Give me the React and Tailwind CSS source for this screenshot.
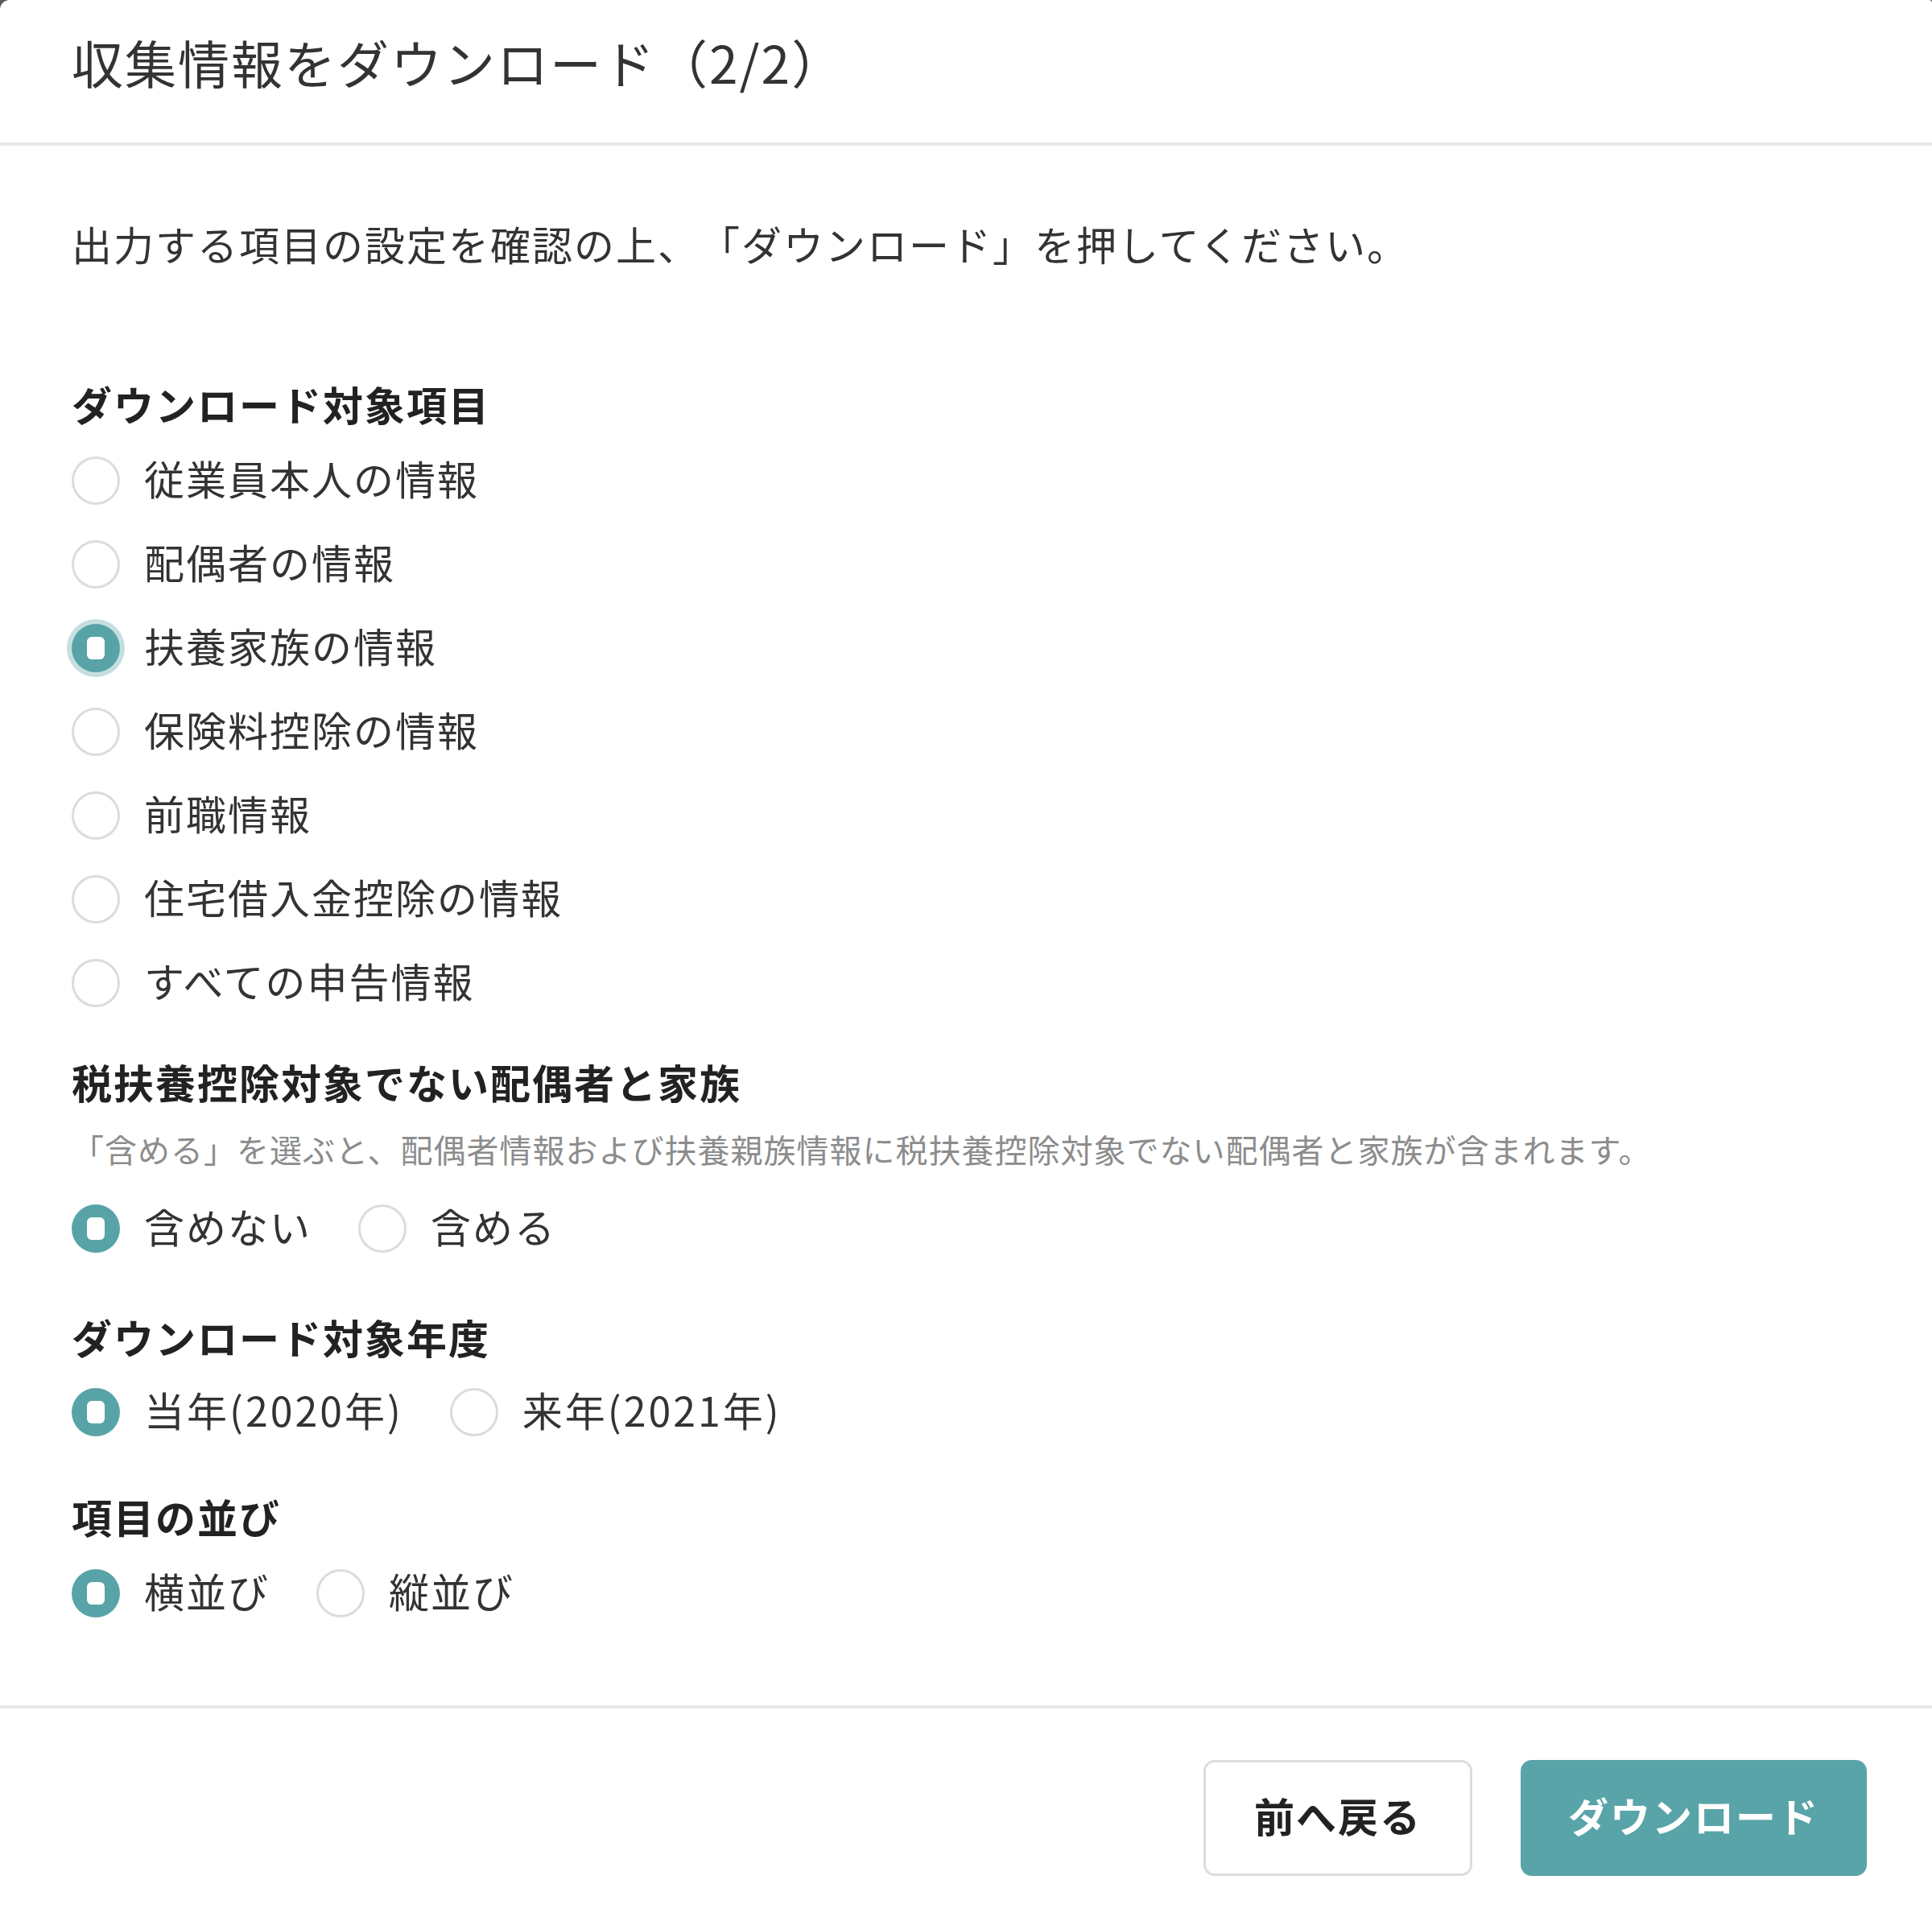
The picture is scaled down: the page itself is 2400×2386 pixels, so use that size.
import React from "react";

const font = { fontFamily: '"Noto Sans CJK JP", "Noto Sans", sans-serif' };

const Radio = ({ checked, focus }) =>
  checked ? (
    <span
      className={
        "flex h-[60px] w-[60px] shrink-0 items-center justify-center rounded-full bg-[#58a3a7]" +
        (focus ? " shadow-[0_0_0_6px_rgba(88,163,167,0.35)]" : "")
      }
    >
      <span className="h-[28px] w-[22px] rounded-[6px] bg-white" />
    </span>
  ) : (
    <span className="h-[60px] w-[60px] shrink-0 rounded-full border-[3px] border-[#dcdcdc] bg-white" />
  );

const Option = ({ label, checked, focus, wide }) => (
  <label className="flex items-center gap-[30px]">
    <Radio checked={checked} focus={focus} />
    <span
      className={
        "pb-[8px] text-[50px] leading-[76px] text-[#333] " + (wide ? "tracking-[3px]" : "tracking-[2px]")
      }
    >
      {label}
    </span>
  </label>
);

const Heading = ({ children, className = "" }) => (
  <h3 className={"text-[50px] font-bold leading-[76px] tracking-[2px] text-[#222] " + className}>
    {children}
  </h3>
);

const targets = [
  "従業員本人の情報",
  "配偶者の情報",
  "扶養家族の情報",
  "保険料控除の情報",
  "前職情報",
  "住宅借入金控除の情報",
  "すべての申告情報",
];

export default function App() {
  return (
    <div
      className="h-[2386px] w-[2400px] overflow-hidden bg-[#5a5a5a] [text-spacing-trim:space-all]"
      style={font}
    >
      <div className="flex h-full w-full flex-col rounded-tl-[12px] rounded-tr-[4px] bg-white">
        {/* header */}
        <div className="border-b-4 border-[#e8e8e8] px-[89px] pb-[53px] pt-[28px]">
          <h2 className="text-[64px] leading-[96px] tracking-[2px] text-[#333]">
            収集情報をダウンロード（2/2）
          </h2>
        </div>

        {/* body */}
        <div className="flex-1 px-[89px] pt-[83px]">
          <p className="text-[50px] leading-[76px] tracking-[2px] text-[#333]">
            出力する項目の設定を確認の上、「ダウンロード」を押してください。
          </p>

          <Heading className="mt-[123px]">ダウンロード対象項目</Heading>
          <div className="mt-[6px] flex flex-col">
            {targets.map((t, i) => (
              <div key={t} className="flex h-[104px] items-center">
                <Option label={t} checked={i === 2} focus={i === 2} />
              </div>
            ))}
          </div>

          <Heading className="mt-[32px]">税扶養控除対象でない配偶者と家族</Heading>
          <p className="mt-[16px] text-[40px] leading-[60px] tracking-[1px] text-[#8c8c8c]">
            「含める」を選ぶと、配偶者情報および扶養親族情報に税扶養控除対象でない配偶者と家族が含まれます。
          </p>
          <div className="mt-[17px] flex h-[104px] items-center gap-[58px]">
            <Option label="含めない" checked />
            <Option label="含める" />
          </div>

          <Heading className="mt-[44px]">ダウンロード対象年度</Heading>
          <div className="mt-[4px] flex h-[104px] items-center gap-[58px]">
            <Option label="当年(2020年)" checked wide />
            <Option label="来年(2021年)" wide />
          </div>

          <Heading className="mt-[39px]">項目の並び</Heading>
          <div className="mt-[6px] flex h-[104px] items-center gap-[58px]">
            <Option label="横並び" checked />
            <Option label="縦並び" />
          </div>
        </div>

        {/* footer */}
        <div className="flex justify-end gap-[60px] border-t-4 border-[#e8e8e8] pb-[56px] pr-[81px] pt-[64px]">
          <button className="flex h-[144px] w-[334px] items-center justify-center rounded-[14px] border-[3px] border-[#dcdcdc] bg-white pb-[8px] text-[50px] font-bold tracking-[2px] text-[#222]">
            前へ戻る
          </button>
          <button className="flex h-[144px] w-[430px] items-center justify-center rounded-[14px] bg-[#59a4a8] pb-[8px] text-[50px] font-bold tracking-[2px] text-white">
            ダウンロード
          </button>
        </div>
      </div>
    </div>
  );
}
